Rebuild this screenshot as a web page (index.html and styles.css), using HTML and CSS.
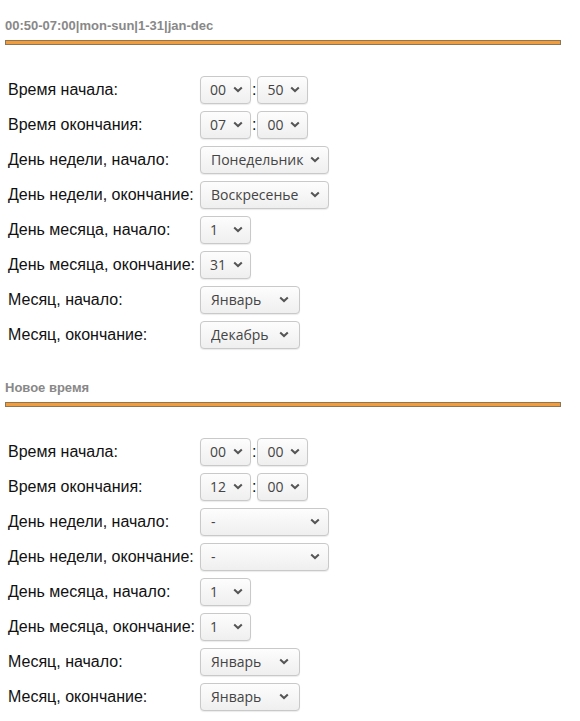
FILE: index.html
```html
<!DOCTYPE html>
<html lang="ru">
<head>
    <meta charset="UTF-8">
    <title>Расписание</title>
    <link rel="stylesheet" href="styles.css">
</head>
<body>
    <div class="section">
        <div class="section-title">00:50-07:00|mon-sun|1-31|jan-dec</div>
        <div class="bar"></div>
        <table class="sched">
            <tr>
                <td class="label">Время начала:</td>
                <td>
                    <div class="time">
                        <select class="sel sel-s"><option>00</option></select>
                        <span class="colon">:</span>
                        <select class="sel sel-s"><option>50</option></select>
                    </div>
                </td>
            </tr>
            <tr>
                <td class="label">Время окончания:</td>
                <td>
                    <div class="time">
                        <select class="sel sel-s"><option>07</option></select>
                        <span class="colon">:</span>
                        <select class="sel sel-s"><option>00</option></select>
                    </div>
                </td>
            </tr>
            <tr>
                <td class="label">День недели, начало:</td>
                <td><select class="sel sel-l"><option>Понедельник</option></select></td>
            </tr>
            <tr>
                <td class="label">День недели, окончание:</td>
                <td><select class="sel sel-l"><option>Воскресенье</option></select></td>
            </tr>
            <tr>
                <td class="label">День месяца, начало:</td>
                <td><select class="sel sel-s"><option>1</option></select></td>
            </tr>
            <tr>
                <td class="label">День месяца, окончание:</td>
                <td><select class="sel sel-s"><option>31</option></select></td>
            </tr>
            <tr>
                <td class="label">Месяц, начало:</td>
                <td><select class="sel sel-m"><option>Январь</option></select></td>
            </tr>
            <tr>
                <td class="label">Месяц, окончание:</td>
                <td><select class="sel sel-m"><option>Декабрь</option></select></td>
            </tr>
        </table>
    </div>

    <div class="section">
        <div class="section-title">Новое время</div>
        <div class="bar"></div>
        <table class="sched">
            <tr>
                <td class="label">Время начала:</td>
                <td>
                    <div class="time">
                        <select class="sel sel-s"><option>00</option></select>
                        <span class="colon">:</span>
                        <select class="sel sel-s"><option>00</option></select>
                    </div>
                </td>
            </tr>
            <tr>
                <td class="label">Время окончания:</td>
                <td>
                    <div class="time">
                        <select class="sel sel-s"><option>12</option></select>
                        <span class="colon">:</span>
                        <select class="sel sel-s"><option>00</option></select>
                    </div>
                </td>
            </tr>
            <tr>
                <td class="label">День недели, начало:</td>
                <td><select class="sel sel-l"><option>-</option></select></td>
            </tr>
            <tr>
                <td class="label">День недели, окончание:</td>
                <td><select class="sel sel-l"><option>-</option></select></td>
            </tr>
            <tr>
                <td class="label">День месяца, начало:</td>
                <td><select class="sel sel-s"><option>1</option></select></td>
            </tr>
            <tr>
                <td class="label">День месяца, окончание:</td>
                <td><select class="sel sel-s"><option>1</option></select></td>
            </tr>
            <tr>
                <td class="label">Месяц, начало:</td>
                <td><select class="sel sel-m"><option>Январь</option></select></td>
            </tr>
            <tr>
                <td class="label">Месяц, окончание:</td>
                <td><select class="sel sel-m"><option>Январь</option></select></td>
            </tr>
        </table>
    </div>
</body>
</html>
```

FILE: styles.css
```css
body {
    margin: 0;
    padding: 0 5px;
    width: 556px;
    font-family: "Liberation Sans", Arial, sans-serif;
    background: #fff;
    color: #111;
}

.section + .section {
    margin-top: 10px;
}

.section-title {
    padding-top: 18px;
    font-size: 13px;
    line-height: 15px;
    font-weight: bold;
    color: #888;
}

/* оранжевая полоса под заголовком */
.bar {
    margin-top: 7px;
    height: 3px;
    background: #f39c3c;
    border: 1px solid #8c7658;
}

.sched {
    margin-top: 27px;
    border-collapse: collapse;
}

.sched td {
    height: 35px;
    padding: 0;
    vertical-align: middle;
}

.sched td.label {
    width: 192px;
    padding-left: 3px;
    font-size: 16px;
    white-space: nowrap;
}

.time {
    display: flex;
    align-items: center;
}

.colon {
    margin: 0 1px;
    font-size: 16px;
}

.sel {
    display: block;
    appearance: none;
    -webkit-appearance: none;
    height: 28px;
    margin: 0;
    padding: 0 0 0 10px;
    font-family: "Open Sans", "Noto Sans", sans-serif;
    font-size: 14px;
    color: #444;
    border: 1px solid #c9c9c9;
    border-radius: 4px;
    background-color: #f7f7f7;
    background-image: url("data:image/svg+xml,%3Csvg xmlns='http://www.w3.org/2000/svg' width='10' height='7' viewBox='0 0 10 7'%3E%3Cpath d='M1.2 1.4 L5 5 L8.8 1.4' fill='none' stroke='%23555' stroke-width='2'/%3E%3C/svg%3E"), linear-gradient(#fdfdfd, #efefef);
    background-repeat: no-repeat;
    background-position: right 8px center, 0 0;
    box-shadow: 0 1px 1px rgba(0, 0, 0, 0.08);
}

.sel-s {
    width: 51px;
    padding-left: 9px;
    background-position: right 7px center, 0 0;
}

.sel-m {
    width: 100px;
    background-position: right 10px center, 0 0;
}

.sel-l {
    width: 129px;
}
```
